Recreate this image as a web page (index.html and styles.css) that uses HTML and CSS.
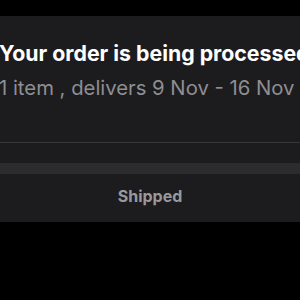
FILE: index.html
```html
<!DOCTYPE html>
<html>
<head>
<meta charset="utf-8">
<link rel="stylesheet" href="styles.css">
</head>
<body>
<div class="card">
  <div class="info">
    <div class="title">Your order is being processed</div>
    <div class="subtitle">1 item , delivers 9 Nov - 16 Nov</div>
  </div>
  <div class="divider"></div>
  <div class="gap"></div>
  <div class="band"></div>
  <div class="status">Shipped</div>
</div>
</body>
</html>
```
FILE: styles.css
```css
html, body {
  margin: 0;
  padding: 0;
  background: #000;
  width: 300px;
  height: 300px;
  overflow: hidden;
}
body {
  padding-top: 16px;
  box-sizing: border-box;
  font-family: Inter, "Liberation Sans", sans-serif;
}
.card {
  background: #1c1c1e;
  overflow: hidden;
}
.info {
  padding-top: 24px;
  padding-bottom: 41px;
  margin-left: -1px;
  display: flex;
  flex-direction: column;
  align-items: flex-start;
}
.title {
  color: #fff;
  font-size: 21.3px;
  font-weight: 700;
  line-height: 26px;
  white-space: nowrap;
}
.subtitle {
  margin-top: 9px;
  color: #8e8e93;
  font-size: 20.3px;
  line-height: 26px;
  white-space: nowrap;
}
.divider {
  height: 1px;
  background: #38383a;
}
.gap {
  height: 20px;
}
.band {
  height: 11px;
  background: #2c2c2e;
}
.status {
  padding-top: 12px;
  padding-bottom: 16px;
  text-align: center;
  color: #98989d;
  font-size: 16px;
  font-weight: 700;
  line-height: 20px;
}
```
